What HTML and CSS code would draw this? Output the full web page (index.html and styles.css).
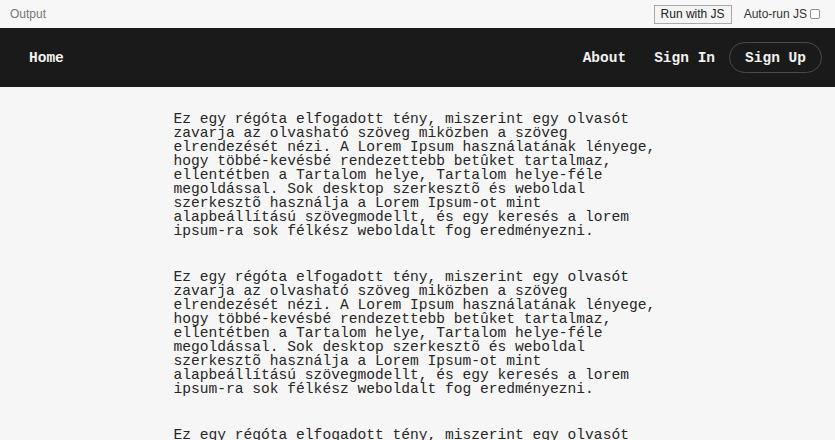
FILE: index.html
```html
<!DOCTYPE html>
<html lang="hu">
<head>
<meta charset="utf-8">
<title>Output</title>
<link rel="stylesheet" href="styles.css">
</head>
<body>
<div class="toolbar">
  <span class="output-label">Output</span>
  <div class="toolbar-actions">
    <button class="run-btn">Run with JS</button>
    <label class="autorun">Auto-run JS <span class="checkbox"></span></label>
  </div>
</div>
<nav class="nav">
  <a class="nav-link" href="#">Home</a>
  <div class="nav-right">
    <a class="nav-link" href="#">About</a>
    <a class="nav-link" href="#">Sign In</a>
    <a class="nav-link pill" href="#">Sign Up</a>
  </div>
</nav>
<main class="content">
  <p>Ez egy régóta elfogadott tény, miszerint egy olvasót zavarja az olvasható szöveg miközben a szöveg elrendezését nézi. A Lorem Ipsum használatának lényege, hogy többé-kevésbé rendezettebb betûket tartalmaz, ellentétben a Tartalom helye, Tartalom helye-féle megoldással. Sok desktop szerkesztõ és weboldal szerkesztõ használja a Lorem Ipsum-ot mint alapbeállítású szövegmodellt, és egy keresés a lorem ipsum-ra sok félkész weboldalt fog eredményezni.</p>
  <p>Ez egy régóta elfogadott tény, miszerint egy olvasót zavarja az olvasható szöveg miközben a szöveg elrendezését nézi. A Lorem Ipsum használatának lényege, hogy többé-kevésbé rendezettebb betûket tartalmaz, ellentétben a Tartalom helye, Tartalom helye-féle megoldással. Sok desktop szerkesztõ és weboldal szerkesztõ használja a Lorem Ipsum-ot mint alapbeállítású szövegmodellt, és egy keresés a lorem ipsum-ra sok félkész weboldalt fog eredményezni.</p>
  <p>Ez egy régóta elfogadott tény, miszerint egy olvasót zavarja az olvasható szöveg miközben a szöveg elrendezését nézi. A Lorem Ipsum használatának lényege, hogy többé-kevésbé rendezettebb betûket tartalmaz, ellentétben a Tartalom helye, Tartalom helye-féle megoldással. Sok desktop szerkesztõ és weboldal szerkesztõ használja a Lorem Ipsum-ot mint alapbeállítású szövegmodellt, és egy keresés a lorem ipsum-ra sok félkész weboldalt fog eredményezni.</p>
</main>
</body>
</html>
```
FILE: styles.css
```css
* { box-sizing: border-box; }
html, body { margin: 0; padding: 0; }
body {
  background: #f6f6f6;
  font-family: "Liberation Mono", "DejaVu Sans Mono", monospace;
  overflow: hidden;
  height: 440px;
}
.toolbar {
  height: 28px;
  background: #f7f7f7;
  display: flex;
  align-items: center;
  justify-content: space-between;
  padding: 0 0 0 10px;
  font-family: "Liberation Sans", Arial, sans-serif;
  font-size: 12px;
  color: #777;
}
.toolbar-actions {
  display: flex;
  align-items: center;
  gap: 12px;
  padding-right: 15px;
}
.run-btn {
  font-family: "Liberation Sans", Arial, sans-serif;
  font-size: 12px;
  color: #222;
  background: #f4f4f4;
  border: 1px solid #a9a9a9;
  height: 19px;
  padding: 0 6px;
  margin: 0;
  border-radius: 0;
}
.autorun {
  display: flex;
  align-items: center;
  gap: 3px;
  color: #333;
}
.checkbox {
  width: 10px;
  height: 10px;
  border: 1px solid #8f8f8f;
  border-radius: 2px;
  background: #fff;
  display: inline-block;
}
.nav {
  height: 59px;
  background: #1a1a1a;
  display: flex;
  align-items: center;
  justify-content: space-between;
  padding: 0 13px 0 15px;
}
.nav-right {
  display: flex;
  align-items: center;
}
.nav-link {
  color: #f2f2f2;
  text-decoration: none;
  font-size: 14.5px;
  font-weight: bold;
  padding: 6px 14px;
  line-height: 16px;
}
.pill {
  border: 1px solid #4a4a4a;
  border-radius: 16px;
  padding: 6px 15px;
  height: 31px;
  display: flex;
  align-items: center;
}
.content {
  width: 488px;
  margin: 0 auto;
  padding-top: 25px;
}
.content p {
  margin: 0 0 32px;
  font-size: 14.6px;
  line-height: 14px;
  color: #262626;
}
```
